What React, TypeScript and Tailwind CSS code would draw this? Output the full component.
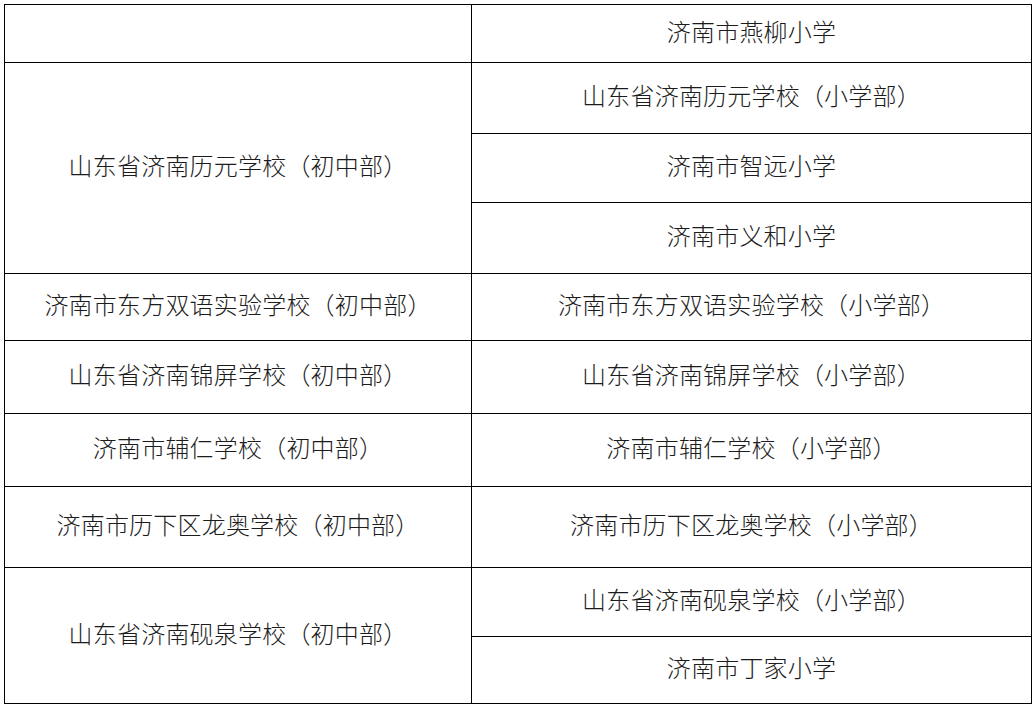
const rows: { left?: string; leftSpan?: number; right: string; h: string }[] = [
  { left: "", right: "济南市燕柳小学", h: "h-[57px]" },
  { left: "山东省济南历元学校（初中部）", leftSpan: 3, right: "山东省济南历元学校（小学部）", h: "h-[70px]" },
  { right: "济南市智远小学", h: "h-[68px]" },
  { right: "济南市义和小学", h: "h-[70px]" },
  { left: "济南市东方双语实验学校（初中部）", right: "济南市东方双语实验学校（小学部）", h: "h-[66px]" },
  { left: "山东省济南锦屏学校（初中部）", right: "山东省济南锦屏学校（小学部）", h: "h-[72px]" },
  { left: "济南市辅仁学校（初中部）", right: "济南市辅仁学校（小学部）", h: "h-[72px]" },
  { left: "济南市历下区龙奥学校（初中部）", right: "济南市历下区龙奥学校（小学部）", h: "h-[80px]" },
  { left: "山东省济南砚泉学校（初中部）", leftSpan: 2, right: "山东省济南砚泉学校（小学部）", h: "h-[68px]" },
  { right: "济南市丁家小学", h: "h-[66px]" },
]

const spanClass: Record<number, string> = {
  1: "row-span-1",
  2: "row-span-2",
  3: "row-span-3",
}

export default function App() {
  return (
    <div
      className="min-h-screen bg-white pl-1 pt-1"
      style={{ fontFamily: '"Noto Sans CJK SC", "Noto Sans", sans-serif' }}
    >
      <div className="grid w-[1028px] grid-cols-[466px_559px] gap-px border border-black bg-black">
        {rows.map((r, i) => (
          <Row key={i} row={r} />
        ))}
      </div>
    </div>
  )
}

function Row({ row }: { row: (typeof rows)[number] }) {
  return (
    <>
      {row.left !== undefined && (
        <div
          className={`flex items-center justify-center bg-white pb-[6px] text-[24px] font-light tracking-[0.2px] text-[#1c1c1c] ${spanClass[row.leftSpan ?? 1]}`}
        >
          {row.left}
        </div>
      )}
      <div
        className={`flex items-center justify-center bg-white pb-[6px] text-[24px] font-light tracking-[0.2px] text-[#1c1c1c] ${row.h}`}
      >
        {row.right}
      </div>
    </>
  )
}
